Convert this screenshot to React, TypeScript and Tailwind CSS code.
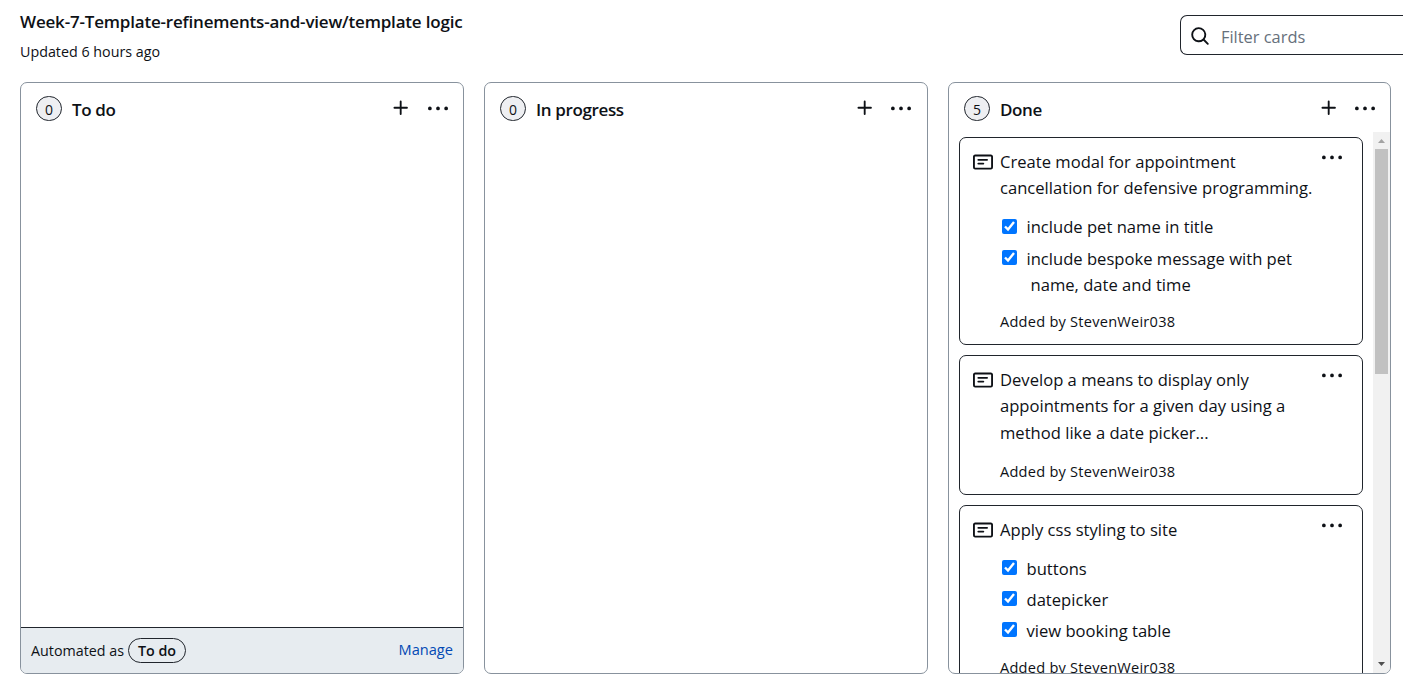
import type { ReactNode } from "react";

type IconProps = { d: string; className?: string };

const PLUS =
  "M7.75 2a.75.75 0 0 1 .75.75V7h4.25a.75.75 0 0 1 0 1.5H8.5v4.25a.75.75 0 0 1-1.5 0V8.5H2.75a.75.75 0 0 1 0-1.5H7V2.75A.75.75 0 0 1 7.75 2Z";
const KEBAB =
  "M8 9a1.5 1.5 0 1 0 0-3 1.5 1.5 0 0 0 0 3ZM1.5 9a1.5 1.5 0 1 0 0-3 1.5 1.5 0 0 0 0 3Zm13 0a1.5 1.5 0 1 0 0-3 1.5 1.5 0 0 0 0 3Z";
const NOTE =
  "M0 3.75C0 2.784.784 2 1.75 2h12.5c.966 0 1.75.784 1.75 1.75v8.5A1.75 1.75 0 0 1 14.25 14H1.75A1.75 1.75 0 0 1 0 12.25Zm1.75-.25a.25.25 0 0 0-.25.25v8.5c0 .138.112.25.25.25h12.5a.25.25 0 0 0 .25-.25v-8.5a.25.25 0 0 0-.25-.25ZM3.5 6.25a.75.75 0 0 1 .75-.75h7a.75.75 0 0 1 0 1.5h-7a.75.75 0 0 1-.75-.75Zm.75 2.25h4a.75.75 0 0 1 0 1.5h-4a.75.75 0 0 1 0-1.5Z";
const SEARCH =
  "M10.68 11.74a6 6 0 0 1-7.922-8.982 6 6 0 0 1 8.982 7.922l3.04 3.04a.749.749 0 0 1-.326 1.275.749.749 0 0 1-.734-.215ZM11.5 7a4.499 4.499 0 1 0-8.997 0A4.499 4.499 0 0 0 11.5 7Z";

function Icon({ d, className = "" }: IconProps) {
  return (
    <svg viewBox="0 0 16 16" className={`size-5 shrink-0 overflow-visible fill-[#0e1116] ${className}`} aria-hidden="true">
      <path d={d} />
    </svg>
  );
}

type ColumnProps = { count: number; title: string; wide: string; kebabGap: string; children?: ReactNode };

function Column({ count, title, wide, kebabGap, children }: ColumnProps) {
  return (
    <section className={`flex h-[592px] shrink-0 flex-col overflow-hidden rounded-[7px] border border-[#88929d] ${wide}`}>
      <div className="flex h-[49px] shrink-0 items-start pl-[15px]">
        <span className="mt-[13px] flex h-[25px] w-[26px] items-center justify-center rounded-full border border-[#20252c] bg-[#eeeff2] pt-px text-[14px]">
          {count}
        </span>
        <h3 className="ml-2.5 mt-3.5 text-[17px] font-semibold leading-[26px] tracking-[-0.37px]">{title}</h3>
        <Icon d={PLUS} className="ml-auto mt-[15px]" />
        <Icon d={KEBAB} className={`mt-4 ${kebabGap}`} />
      </div>
      {children}
    </section>
  );
}

function Card({ lines, height, children }: { lines: ReactNode[]; height: string; children?: ReactNode }) {
  return (
    <article className={`flex w-[404px] shrink-0 rounded-[7px] border border-[#20252c] pl-[13px] ${height}`}>
      <Icon d={NOTE} className="mt-3.5" />
      <div className="ml-[7px] mt-[11px] flex grow flex-col items-start whitespace-nowrap text-[16.6px] leading-[26.25px]">
        {lines.map((l, i) => (
          <p key={i}>{l}</p>
        ))}
        {children}
      </div>
      <Icon d={KEBAB} className="mr-5 mt-2.5" />
    </article>
  );
}

function Task({ children }: { children: ReactNode }) {
  return (
    <li className="flex items-start">
      <input type="checkbox" checked readOnly className="ml-0.5 mr-[9.5px] mt-[4.2px] size-[15px] accent-[#0075ff]" />
      <div>{children}</div>
    </li>
  );
}

function Added({ gap }: { gap: string }) {
  return <p className={`text-[14.6px] leading-[22.5px] tracking-[0.23px] ${gap}`}>Added by StevenWeir038</p>;
}

export default function App() {
  return (
    <main className="flex h-[682px] w-[1403px] flex-col overflow-hidden bg-white pl-5 font-['Open_Sans','Noto_Sans',sans-serif] text-[#0e1116]">
      <header className="flex h-[82px] shrink-0 items-start justify-between">
        <div className="whitespace-nowrap">
          <h1 className="mt-[9px] text-[17px] font-semibold leading-[26px] tracking-[-0.19px]">
            <span>Week-7-Template-refinements-and-view/template logic</span>
          </h1>
          <p className="mt-1.5 text-[14.3px] leading-[22px]">
            <span>Updated 6 hours ago</span>
          </p>
        </div>
        <div className="mt-[15px] flex h-10 w-[223px] items-center rounded-l-[7px] border border-r-0 border-[#20252c] pl-[9px]">
          <Icon d={SEARCH} className="mt-0.5" />
          <span className="ml-[11px] mt-1 text-[16.4px] text-[#66707b]">Filter cards</span>
        </div>
      </header>
      <div className="flex gap-5">
        <Column count={0} title="To do" wide="w-[444px]" kebabGap="ml-[17px] mr-[15px]">
          <footer className="mt-auto flex h-[46px] shrink-0 items-center justify-between border-t border-[#20252c] bg-[#e7ecf0] px-2.5 text-[14.3px]">
            <div className="flex items-center">
              <span className="w-[93px] whitespace-nowrap">Automated as</span>
              <span className="ml-1 flex h-[25px] w-[58px] items-center justify-center rounded-full border border-[#20252c] font-semibold">
                To do
              </span>
            </div>
            <a className="mb-0.5 text-[14.6px] text-[#0349b4]">Manage</a>
          </footer>
        </Column>
        <Column count={0} title="In progress" wide="w-[444px]" kebabGap="ml-4 mr-4" />
        <Column count={5} title="Done" wide="w-[443px]" kebabGap="ml-4 mr-[15px]">
          <div className="flex min-h-0 grow justify-between overflow-hidden">
            <div className="ml-2.5 flex flex-col gap-2.5 pt-[5px]">
              <Card height="h-[208px]" lines={["Create modal for appointment", "cancellation for defensive programming."]}>
                <ul className="mt-[12.9px] flex flex-col gap-[5px]">
                  <Task>include pet name in title</Task>
                  <Task>
                    <p>include bespoke message with pet</p>
                    <p className="pl-1">name, date and time</p>
                  </Task>
                </ul>
                <Added gap="mt-[12.1px]" />
              </Card>
              <Card
                height="h-[140px]"
                lines={["Develop a means to display only", "appointments for a given day using a", "method like a date picker..."]}
              >
                <Added gap="mt-[14.5px]" />
              </Card>
              <Card height="h-[190px]" lines={["Apply css styling to site"]}>
                <ul className="mt-[12.5px] flex flex-col gap-[5px]">
                  <Task>buttons</Task>
                  <Task>datepicker</Task>
                  <Task>view booking table</Task>
                </ul>
                <Added gap="mt-[11.75px]" />
              </Card>
            </div>
            <div className="flex w-[17px] flex-col items-center bg-[#f1f1f1]">
              <svg viewBox="0 0 17 17" className="size-[17px] shrink-0 fill-[#a3a3a3]">
                <path d="M5 11h7L8.5 7Z" />
              </svg>
              <div className="h-[225px] w-[13px] bg-[#c1c1c1]" />
              <svg viewBox="0 0 17 17" className="mt-auto size-[17px] shrink-0 fill-[#505050]">
                <path d="M5 6h7L8.5 10Z" />
              </svg>
            </div>
          </div>
        </Column>
      </div>
    </main>
  );
}
